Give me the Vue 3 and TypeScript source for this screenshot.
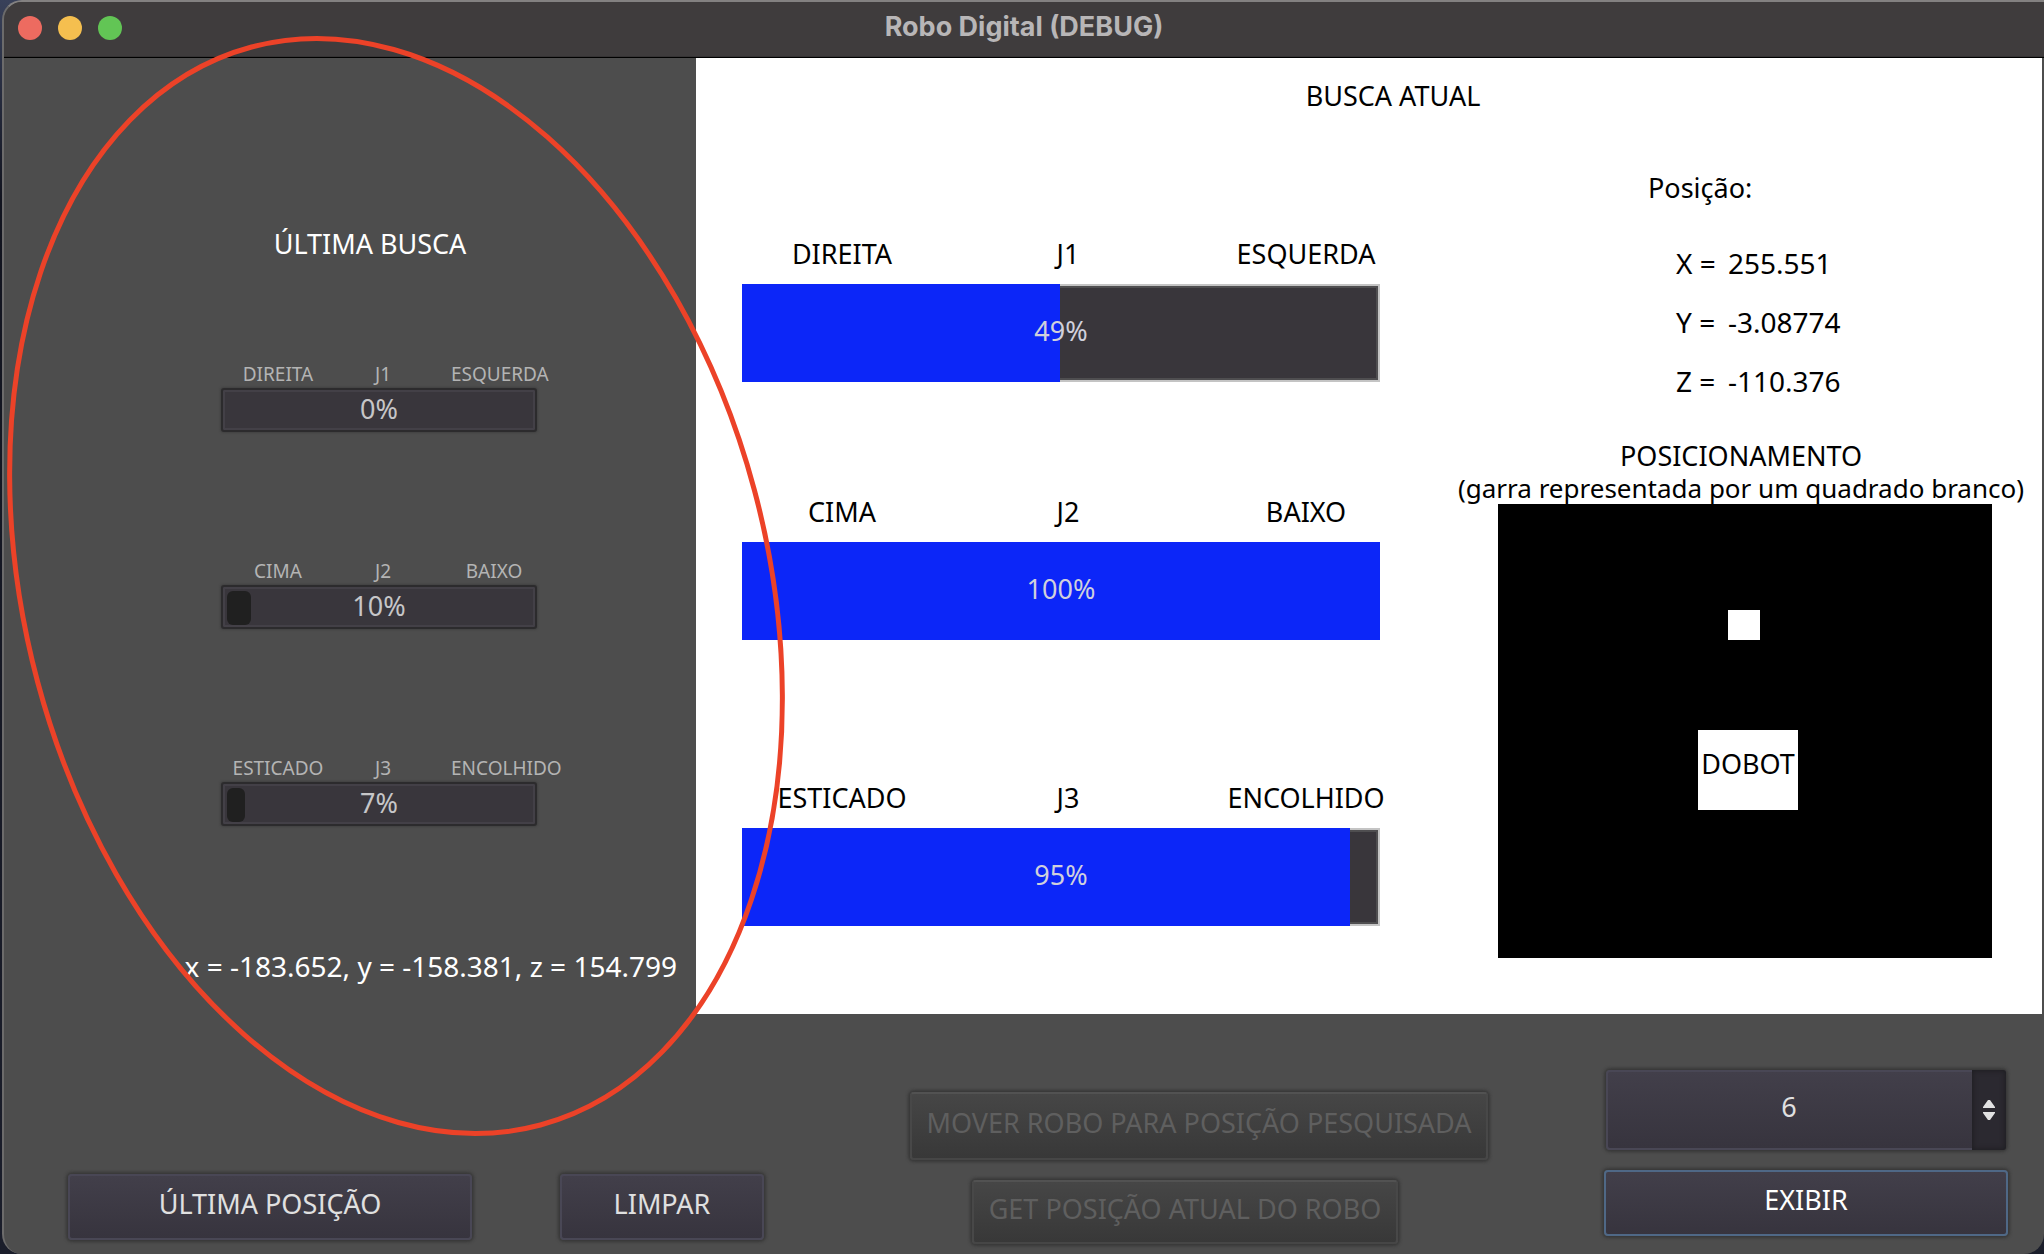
<script setup lang="ts">
import { ref } from 'vue'

interface Joint {
  name: string
  low: string
  high: string
  value: number
  fill: number
}

const lastSearch: Joint[] = [
  { name: 'J1', low: 'DIREITA', high: 'ESQUERDA', value: 0, fill: 0 },
  { name: 'J2', low: 'CIMA', high: 'BAIXO', value: 10, fill: 8 },
  { name: 'J3', low: 'ESTICADO', high: 'ENCOLHIDO', value: 7, fill: 6 },
]

const currentSearch: Joint[] = [
  { name: 'J1', low: 'DIREITA', high: 'ESQUERDA', value: 49, fill: 49.8 },
  { name: 'J2', low: 'CIMA', high: 'BAIXO', value: 100, fill: 100 },
  { name: 'J3', low: 'ESTICADO', high: 'ENCOLHIDO', value: 95, fill: 95.3 },
]

const position = [
  { axis: 'X', value: '255.551' },
  { axis: 'Y', value: '-3.08774' },
  { axis: 'Z', value: '-110.376' },
]

const options = [1, 2, 3, 4, 5, 6]
const selected = ref(6)
</script>

<template>
  <div class="window">
    <header class="titlebar">
      <div class="lights">
        <span class="light red"></span>
        <span class="light yellow"></span>
        <span class="light green"></span>
      </div>
      <h1>Robo Digital (DEBUG)</h1>
    </header>

    <main class="content">
      <aside class="last">
        <div class="last-body">
          <h2>ÚLTIMA BUSCA</h2>
          <div class="last-joints">
            <div v-for="j in lastSearch" :key="j.name" class="mini">
              <div class="mini-labels">
                <span>{{ j.low }}</span>
                <span>{{ j.name }}</span>
                <span>{{ j.high }}</span>
              </div>
              <div class="mini-bar" role="progressbar" :aria-label="j.name" :aria-valuenow="j.value">
                <div v-if="j.fill" class="mini-fill" :style="{ width: j.fill + '%' }"></div>
                <span class="percent">{{ j.value }}%</span>
              </div>
            </div>
          </div>
        </div>
        <p class="coords">x = -183.652, y = -158.381, z = 154.799</p>
      </aside>

      <section class="current">
        <h2>BUSCA ATUAL</h2>
        <div class="current-body">
          <div class="joints">
            <div v-for="j in currentSearch" :key="j.name" class="joint">
              <div class="joint-labels">
                <span>{{ j.low }}</span>
                <span>{{ j.name }}</span>
                <span>{{ j.high }}</span>
              </div>
              <div class="bar" role="progressbar" :aria-label="j.name" :aria-valuenow="j.value">
                <div class="fill" :style="{ width: j.fill + '%' }"></div>
                <span class="percent">{{ j.value }}%</span>
              </div>
            </div>
          </div>

          <div class="readout">
            <h3 class="position-title">Posição:</h3>
            <dl class="position">
              <div v-for="p in position" :key="p.axis">
                <dt>{{ p.axis }} =</dt>
                <dd>{{ p.value }}</dd>
              </div>
            </dl>
            <div class="caption">
              <h3>POSICIONAMENTO</h3>
              <p>(garra representada por um quadrado branco)</p>
            </div>
            <div class="map">
              <div class="claw"></div>
              <div class="dobot">DOBOT</div>
            </div>
          </div>
        </div>
      </section>
    </main>

    <footer class="actions">
      <div class="group-left">
        <button type="button" class="wide">ÚLTIMA POSIÇÃO</button>
        <button type="button" class="narrow">LIMPAR</button>
      </div>
      <div class="group-center">
        <button type="button" class="move" disabled>MOVER ROBO PARA POSIÇÃO PESQUISADA</button>
        <button type="button" class="get" disabled>GET POSIÇÃO ATUAL DO ROBO</button>
      </div>
      <div class="group-right">
        <div class="picker">
          <select v-model="selected" aria-label="Posição a exibir">
            <option v-for="o in options" :key="o" :value="o">{{ o }}</option>
          </select>
          <span class="arrows">
            <svg width="12" height="20" viewBox="0 0 12 20" aria-hidden="true">
              <path d="M5 0h2l5 7v1H0V7zM0 12h12v1l-5 7H5l-5-7z" fill="#e2e2e2" />
            </svg>
          </span>
        </div>
        <button type="button" class="show">EXIBIR</button>
      </div>
    </footer>

    <svg class="marker" width="800" height="1150" viewBox="0 0 800 1150" aria-hidden="true">
      <ellipse cx="396" cy="586" rx="371" ry="558" transform="rotate(-15 396 586)" fill="none" stroke="#ec4228" stroke-width="5" />
    </svg>
  </div>
</template>

<style>
body {
  margin: 0;
  background: linear-gradient(#39415a, #12141f 200px, #1b1e2b);
}
</style>

<style scoped>
* {
  box-sizing: border-box;
}

.window {
  display: flex;
  flex-direction: column;
  min-height: 100vh;
  margin-left: 2px;
  border-left: 2px solid #6c6b6b;
  border-top: 2px solid #838181;
  border-radius: 20px 0 20px 20px;
  background: #4d4d4d;
  font: 27px/38px 'Noto Sans', sans-serif;
  color: #fff;
  overflow: hidden;
}

h1,
h2,
h3,
p,
dl,
dd {
  margin: 0;
  font-weight: 400;
  font-size: inherit;
}

.titlebar {
  display: grid;
  grid-template-columns: 1fr auto 1fr;
  align-items: center;
  height: 56px;
  padding: 0 14px 3px;
  background: #3f3c3d;
  border-bottom: 1px solid #000;
  box-shadow: inset 0 -1px #353334;
}

.lights {
  display: flex;
  gap: 16px;
}

.light {
  width: 24px;
  height: 24px;
  border-radius: 50%;
}

.red {
  background: #ed6b60;
}

.yellow {
  background: #f5bf4f;
}

.green {
  background: #62c555;
}

.titlebar h1 {
  padding-bottom: 2px;
  font: 700 27px/32px Inter, sans-serif;
  color: #b8b6b7;
}

.content {
  display: grid;
  grid-template-columns: 692fr 1346fr;
  padding-right: 2px;
}

.last {
  padding: 167px 0 28px;
}

.last-body {
  width: 316px;
  margin-left: 217px;
}

.last h2 {
  padding-right: 18px;
  text-align: center;
}

.last-joints {
  display: flex;
  flex-direction: column;
  gap: 125px;
  margin: 97px 0 121px;
}

.mini-labels {
  display: grid;
  grid-template-columns: 114px 96px 20px 86px;
  font-size: 19px;
  line-height: 28px;
  color: #b4b4b4;
  text-align: center;
  white-space: nowrap;
}

.mini-labels span:last-child {
  grid-column: 4;
}

.mini-bar {
  display: grid;
  align-items: center;
  height: 44px;
  padding: 4px;
  border: 2px solid #2c2b2d;
  border-radius: 3px;
  background: #39363c;
  box-shadow: inset 0 0 0 2px #434047, 0 0 2px 1px #424242;
}

.mini-bar > *,
.bar > * {
  grid-area: 1 / 1;
}

.mini-fill {
  height: 100%;
  border-radius: 6px;
  background: #202020;
}

.percent {
  text-align: center;
  color: #c6c6c8;
}

.mini-bar .percent {
  margin-top: -4px;
}

.coords {
  padding-right: 19px;
  font-size: 28px;
  text-align: right;
  white-space: nowrap;
}

.current {
  padding-top: 19px;
  background: #fff;
  color: #000;
}

.current h2 {
  padding-left: 48px;
  text-align: center;
}

.current-body {
  display: grid;
  grid-template-columns: minmax(0, 680fr) minmax(0, 586fr);
  gap: 26px;
  padding: 0 8px 0 46px;
}

.joints {
  padding-top: 120px;
}

.joint + .joint {
  margin-top: 111px;
}

.joint + .joint:last-child {
  margin-top: 139px;
}

.joint-labels {
  display: grid;
  grid-template-columns: 200fr 252fr 224fr 4fr;
  margin-bottom: 11px;
  text-align: center;
}

.bar {
  display: grid;
  align-items: center;
  height: 98px;
  margin-right: 42px;
  background: #39363b;
  box-shadow: inset 0 0 0 2px #c4c4c4, inset 0 0 0 4px #4f4e50;
}

.fill {
  height: 98px;
  background: #0c26f8;
}

.bar .percent {
  margin-top: -4px;
  color: #d0d0dc;
}

.position-title {
  margin: 54px 0 37px 200px;
}

.position {
  display: grid;
  gap: 21px;
  margin-left: 228px;
  font-size: 28px;
}

.position div {
  display: grid;
  grid-template-columns: 52px auto;
}

.caption {
  margin: 40px 0 0;
  line-height: 32px;
  text-align: center;
  white-space: nowrap;
}

.caption p {
  font-size: 26px;
}

.map {
  position: relative;
  height: 454px;
  margin: 0 42px 56px 50px;
  background: #000;
}

.claw,
.dobot {
  position: absolute;
  background: #fff;
}

.claw {
  left: 230px;
  top: 106px;
  width: 32px;
  height: 30px;
}

.dobot {
  left: 200px;
  top: 226px;
  width: 100px;
  height: 80px;
  padding-top: 15px;
  text-align: center;
}

.actions {
  display: grid;
  grid-template-columns: 842fr 694fr 404fr;
  align-items: start;
  padding: 0 36px 10px 64px;
}

.group-left {
  display: flex;
  gap: 88px;
  padding-top: 160px;
}

.group-center,
.group-right {
  display: flex;
  flex-direction: column;
  gap: 20px;
}

.group-center {
  align-items: flex-start;
  padding-top: 78px;
}

.group-right {
  padding-top: 56px;
}

button,
select {
  height: 66px;
  padding: 0 0 6px;
  border: 2px solid #494755;
  border-radius: 4px;
  background: linear-gradient(#423f4a, #37343e);
  box-shadow: 0 0 3px 2px #383838;
  font: inherit;
  color: #e0e0e0;
  white-space: nowrap;
}

button:disabled {
  border-color: #525252 #484848 #464646;
  background: linear-gradient(#464646, #383838);
  color: #5f5f5f;
}

.wide {
  width: 404px;
}

.narrow {
  width: 204px;
}

.move {
  width: 578px;
  height: 68px;
}

.get {
  width: 426px;
  height: 64px;
  margin-left: 62px;
}

.show {
  border-color: #4f6886;
  color: #fff;
}

.picker {
  position: relative;
  display: grid;
  height: 80px;
  margin: 0 2px;
}

select {
  height: 80px;
  margin: 0;
  padding: 0 34px 6px 0;
  appearance: none;
  text-align-last: center;
}

.arrows {
  position: absolute;
  inset: 0 0 0 auto;
  display: grid;
  place-items: center;
  width: 34px;
  border-radius: 0 3px 3px 0;
  background: #2b2930;
  box-shadow: inset 0 0 5px 1px #1f1e22;
  pointer-events: none;
}

.marker {
  position: absolute;
  left: 0;
  top: 0;
  pointer-events: none;
}
</style>
